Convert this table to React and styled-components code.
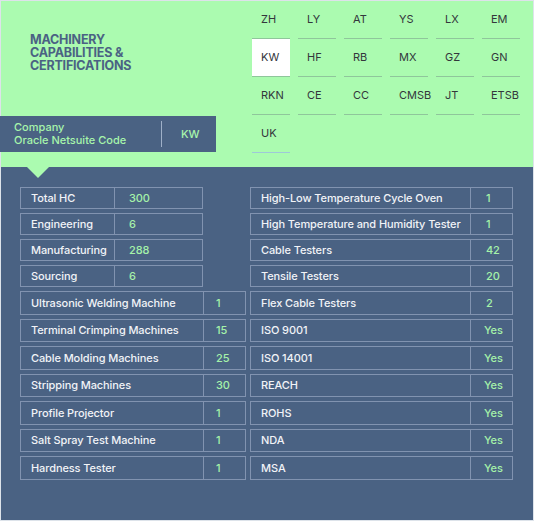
import styled, { createGlobalStyle } from "styled-components";

const tabs = [
  "ZH", "LY", "AT", "YS", "LX", "EM",
  "KW", "HF", "RB", "MX", "GZ", "GN",
  "RKN", "CE", "CC", "CMSB", "JT", "ETSB",
  "UK",
];

const leftRows = [
  { label: "Total HC", value: "300", short: true },
  { label: "Engineering", value: "6", short: true },
  { label: "Manufacturing", value: "288", short: true },
  { label: "Sourcing", value: "6", short: true },
  { label: "Ultrasonic Welding Machine", value: "1" },
  { label: "Terminal Crimping Machines", value: "15" },
  { label: "Cable Molding Machines", value: "25" },
  { label: "Stripping Machines", value: "30" },
  { label: "Profile Projector", value: "1" },
  { label: "Salt Spray Test Machine", value: "1" },
  { label: "Hardness Tester", value: "1" },
];

const rightRows = [
  { label: "High-Low Temperature Cycle Oven", value: "1" },
  { label: "High Temperature and Humidity Tester", value: "1" },
  { label: "Cable Testers", value: "42" },
  { label: "Tensile Testers", value: "20" },
  { label: "Flex Cable Testers", value: "2" },
  { label: "ISO 9001", value: "Yes" },
  { label: "ISO 14001", value: "Yes" },
  { label: "REACH", value: "Yes" },
  { label: "ROHS", value: "Yes" },
  { label: "NDA", value: "Yes" },
  { label: "MSA", value: "Yes" },
];

const GlobalStyle = createGlobalStyle`
  body {
    margin: 0;
    background: #ffffff;
  }
  * {
    box-sizing: border-box;
  }
`;

const Page = styled.div`
  width: 534px;
  height: 521px;
  border: 1px solid #dde3ea;
  display: flex;
  flex-direction: column;
  font-family: Inter, "Liberation Sans", sans-serif;
`;

const Header = styled.header`
  height: 166px;
  background: #abfbb0;
  display: flex;
`;

const Intro = styled.div`
  width: 250px;
  display: flex;
  flex-direction: column;
  padding-top: 32px;
`;

const Title = styled.h2`
  margin: 0 0 0 29px;
  font-size: 12.5px;
  line-height: 13px;
  font-weight: 700;
  letter-spacing: -0.2px;
  color: #4a6283;
`;

const CodeBar = styled.div`
  margin: auto 0 15px -1px;
  width: 216px;
  height: 36px;
  background: #4a6283;
  display: flex;
  align-items: center;
  color: #a7f5ab;
  font-size: 11px;
  font-weight: 500;
`;

const CodeLabel = styled.div`
  width: 162px;
  padding-left: 14px;
  line-height: 13px;
  border-right: 1px solid #9fb0c8;
`;

const CodeValue = styled.div`
  padding-left: 19px;
`;

const Tabs = styled.div`
  display: grid;
  grid-template-columns: repeat(6, 38px);
  grid-auto-rows: 38px;
  column-gap: 8px;
  margin-left: 1px;
  align-content: start;
`;

const Tab = styled.div`
  display: flex;
  align-items: center;
  padding: 0 0 1px 9px;
  font-size: 11px;
  font-weight: 400;
  color: #33373c;
  white-space: nowrap;
  border-bottom: 1px solid ${({ $hover }) => ($hover ? "#9ec8d8" : "#8fc69b")};
  background: ${({ $active }) => ($active ? "#ffffff" : "transparent")};
`;

const Body = styled.section`
  flex: 1;
  position: relative;
  background: #4a6283;
  padding: 20px 0 0 19px;

  &::before {
    content: "";
    position: absolute;
    top: 0;
    left: 26px;
    border-left: 11px solid transparent;
    border-right: 11px solid transparent;
    border-top: 11px solid #abfbb0;
  }
`;

const Table = styled.div`
  display: grid;
  grid-template-columns: 226px 263px;
  grid-template-rows: repeat(4, 22px) repeat(7, 23.5px);
  grid-auto-flow: column;
  column-gap: 4px;
  row-gap: 4px;
`;

const Row = styled.div`
  display: grid;
  grid-template-columns: ${({ $split }) => $split};
  width: ${({ $width }) => $width};
  border: 1px solid #8193b0;
  font-size: 11px;
  font-weight: 500;
  letter-spacing: -0.1px;
`;

const Label = styled.div`
  display: flex;
  align-items: center;
  padding-left: 10px;
  color: #f1f3f7;
  white-space: nowrap;
  border-right: 1px solid #8193b0;
`;

const Value = styled.div`
  display: flex;
  align-items: center;
  padding-left: ${({ $pad }) => $pad};
  color: #a5f2a9;
`;

export default function App() {
  return (
    <>
      <GlobalStyle />
      <Page>
        <Header>
          <Intro>
            <Title>
              MACHINERY
              <br />
              CAPABILITIES &amp;
              <br />
              CERTIFICATIONS
            </Title>
            <CodeBar>
              <CodeLabel>
                Company
                <br />
                Oracle Netsuite Code
              </CodeLabel>
              <CodeValue>KW</CodeValue>
            </CodeBar>
          </Intro>
          <Tabs>
            {tabs.map((t) => (
              <Tab key={t} $active={t === "KW"} $hover={t === "UK"}>
                {t}
              </Tab>
            ))}
          </Tabs>
        </Header>
        <Body>
          <Table>
            {leftRows.map((r) => (
              <Row
                key={r.label}
                $split={r.short ? "94px 1fr" : "183px 1fr"}
                $width={r.short ? "183px" : "226px"}>
                <Label>{r.label}</Label>
                <Value $pad={r.short ? "14px" : "12px"}>{r.value}</Value>
              </Row>
            ))}
            {rightRows.map((r) => (
              <Row key={r.label} $split="220px 1fr" $width="263px">
                <Label>{r.label}</Label>
                <Value $pad={r.value === "Yes" ? "13px" : "15px"}>{r.value}</Value>
              </Row>
            ))}
          </Table>
        </Body>
      </Page>
    </>
  );
}
